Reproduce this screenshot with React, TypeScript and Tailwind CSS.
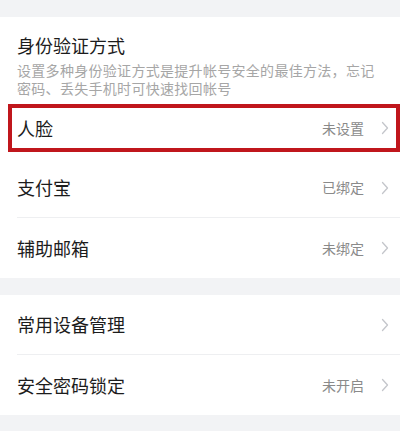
import React from 'react';

interface Item {
  label: string;
  value?: string;
  divider?: boolean;
}

const verifyItems: Item[] = [
  { label: '人脸', value: '未设置' },
  { label: '支付宝', value: '已绑定', divider: true },
  { label: '辅助邮箱', value: '未绑定' },
];

const deviceItems: Item[] = [
  { label: '常用设备管理', divider: true },
  { label: '安全密码锁定', value: '未开启' },
];

const Chevron = () => (
  <svg width="8" height="14" viewBox="0 0 8 14" fill="none" className="ml-[17px]">
    <path d="M1.5 1.5L6.5 7L1.5 12.5" stroke="#c4c6cb" strokeWidth="1.3" strokeLinecap="round" strokeLinejoin="round" />
  </svg>
);

const Row = ({ item }: { item: Item }) => (
  <div className="pl-[17px]">
    <div className={`flex h-[60px] items-center pr-[11px] ${item.divider ? 'border-b border-[#eeeff1]' : ''}`}>
      <span className="flex-1 text-[18px] text-[#1c1c1c]">{item.label}</span>
      {item.value && <span className="text-[14px] text-[#8a8a8a]">{item.value}</span>}
      <Chevron />
    </div>
  </div>
);

const App: React.FC = () => {
  return (
    <div
      className="w-[400px] h-[431px] overflow-hidden bg-[#f2f3f5]"
      style={{ fontFamily: '"Noto Sans CJK SC", "Noto Sans", sans-serif' }}
    >
      <div className="h-[17px]" />
      <div className="relative bg-white">
        <div className="px-[17px] pt-[15px] pb-[1px]">
          <h2 className="text-[18px] leading-[26px] text-[#1c1c1c]">身份验证方式</h2>
          <p className="mt-[3px] text-[14px] leading-[18px] text-[#a6a6a6] tracking-[0.3px]">
            设置多种身份验证方式是提升帐号安全的最佳方法，忘记密码、丢失手机时可快速找回帐号
          </p>
        </div>
        {verifyItems.map((item) => (
          <Row key={item.label} item={item} />
        ))}
        <div className="absolute left-[8px] top-[87px] h-[48px] w-[392px] border-[4px] border-[#c0161c]" />
      </div>
      <div className="h-[17px]" />
      <div className="bg-white">
        {deviceItems.map((item) => (
          <Row key={item.label} item={item} />
        ))}
      </div>
    </div>
  );
};

export default App;
